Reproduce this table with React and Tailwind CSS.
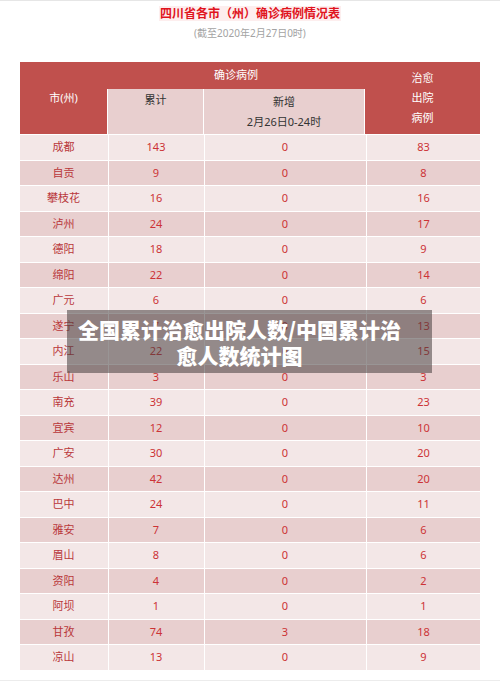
import React from "react";

const rows = [
    ["成都", 143, 0, 83],
    ["自贡", 9, 0, 8],
    ["攀枝花", 16, 0, 16],
    ["泸州", 24, 0, 17],
    ["德阳", 18, 0, 9],
    ["绵阳", 22, 0, 14],
    ["广元", 6, 0, 6],
    ["遂宁", 7, 0, 13],
    ["内江", 22, 0, 15],
    ["乐山", 3, 0, 3],
    ["南充", 39, 0, 23],
    ["宜宾", 12, 0, 10],
    ["广安", 30, 0, 20],
    ["达州", 42, 0, 20],
    ["巴中", 24, 0, 11],
    ["雅安", 7, 0, 6],
    ["眉山", 8, 0, 6],
    ["资阳", 4, 0, 2],
    ["阿坝", 1, 0, 1],
    ["甘孜", 74, 3, 18],
    ["凉山", 13, 0, 9],
];

const cols = "grid grid-cols-[87px_95px_161px_114px] gap-x-px";

export default function App() {
    return (
        <div className="relative w-[500px] h-[681px] bg-white overflow-hidden border-t border-[#e6e6e6] font-['Noto_Sans','Noto_Sans_CJK_SC',sans-serif]">
            {/* title */}
            <div className="flex flex-col items-center pt-[5px]">
                <h1 className="bg-[#fdeeee] px-[1px] text-[12px] leading-[15px] font-bold text-[#e0141e]">
                    四川省各市（州）确诊病例情况表
                </h1>
                <p className="mt-[6px] text-[10px] leading-[13px] text-[#a3a3a3]">
                    (截至2020年2月27日0时)
                </p>
            </div>

            {/* table */}
            <div className="mx-[20px] mt-[22px] w-[460px]">
                <div className="grid grid-cols-[87px_96px_162px_115px] grid-rows-[27px_45px] bg-[#c0504d] text-[11px] text-white">
                    <div className="row-span-2 flex items-center justify-center">市(州)</div>
                    <div className="col-span-2 flex items-center justify-center">确诊病例</div>
                    <div className="row-span-2 flex flex-col items-center justify-center leading-[20px]">
                        <span>治愈</span>
                        <span>出院</span>
                        <span>病例</span>
                    </div>
                    <div className="flex justify-center pt-[3px] bg-[#e8cfcf] border-l border-white text-[#333]">累计</div>
                    <div className="flex flex-col items-center pt-[3px] leading-[20px] bg-[#e8cfcf] border-l border-r border-white text-[#333]">
                        <span>新增</span>
                        <span>2月26日0-24时</span>
                    </div>
                </div>

                <div className="flex flex-col gap-y-px pt-px bg-white">
                    {rows.map((r, i) => (
                        <div
                            key={r[0]}
                            className={`${cols} h-[24.5px] text-[11px] ${i % 2 === 0 ? "bg-[#f3e7e7]" : "bg-[#e8cfcf]"}`}
                        >
                            <div className="flex items-center justify-center text-[#b9373a]">{r[0]}</div>
                            <div className="flex items-center justify-center border-l border-white text-[#cc3336]">{r[1]}</div>
                            <div className="flex items-center justify-center border-l border-white text-[#cc3336]">{r[2]}</div>
                            <div className="flex items-center justify-center border-l border-white text-[#cc3336]">{r[3]}</div>
                        </div>
                    ))}
                </div>
            </div>

            <div className="absolute left-0 right-0 top-[679px] border-t-2 border-[#ececec]" />

            {/* caption overlay */}
            <div className="absolute left-[67px] top-[309px] w-[365px] h-[63px] pr-[20px] bg-[rgba(70,62,62,0.55)] flex flex-col items-center justify-center text-white font-black text-[21px] leading-[26px] font-['Noto_Sans_CJK_SC',sans-serif]">
                <span>全国累计治愈出院人数/中国累计治</span>
                <span>愈人数统计图</span>
            </div>
        </div>
    );
}
